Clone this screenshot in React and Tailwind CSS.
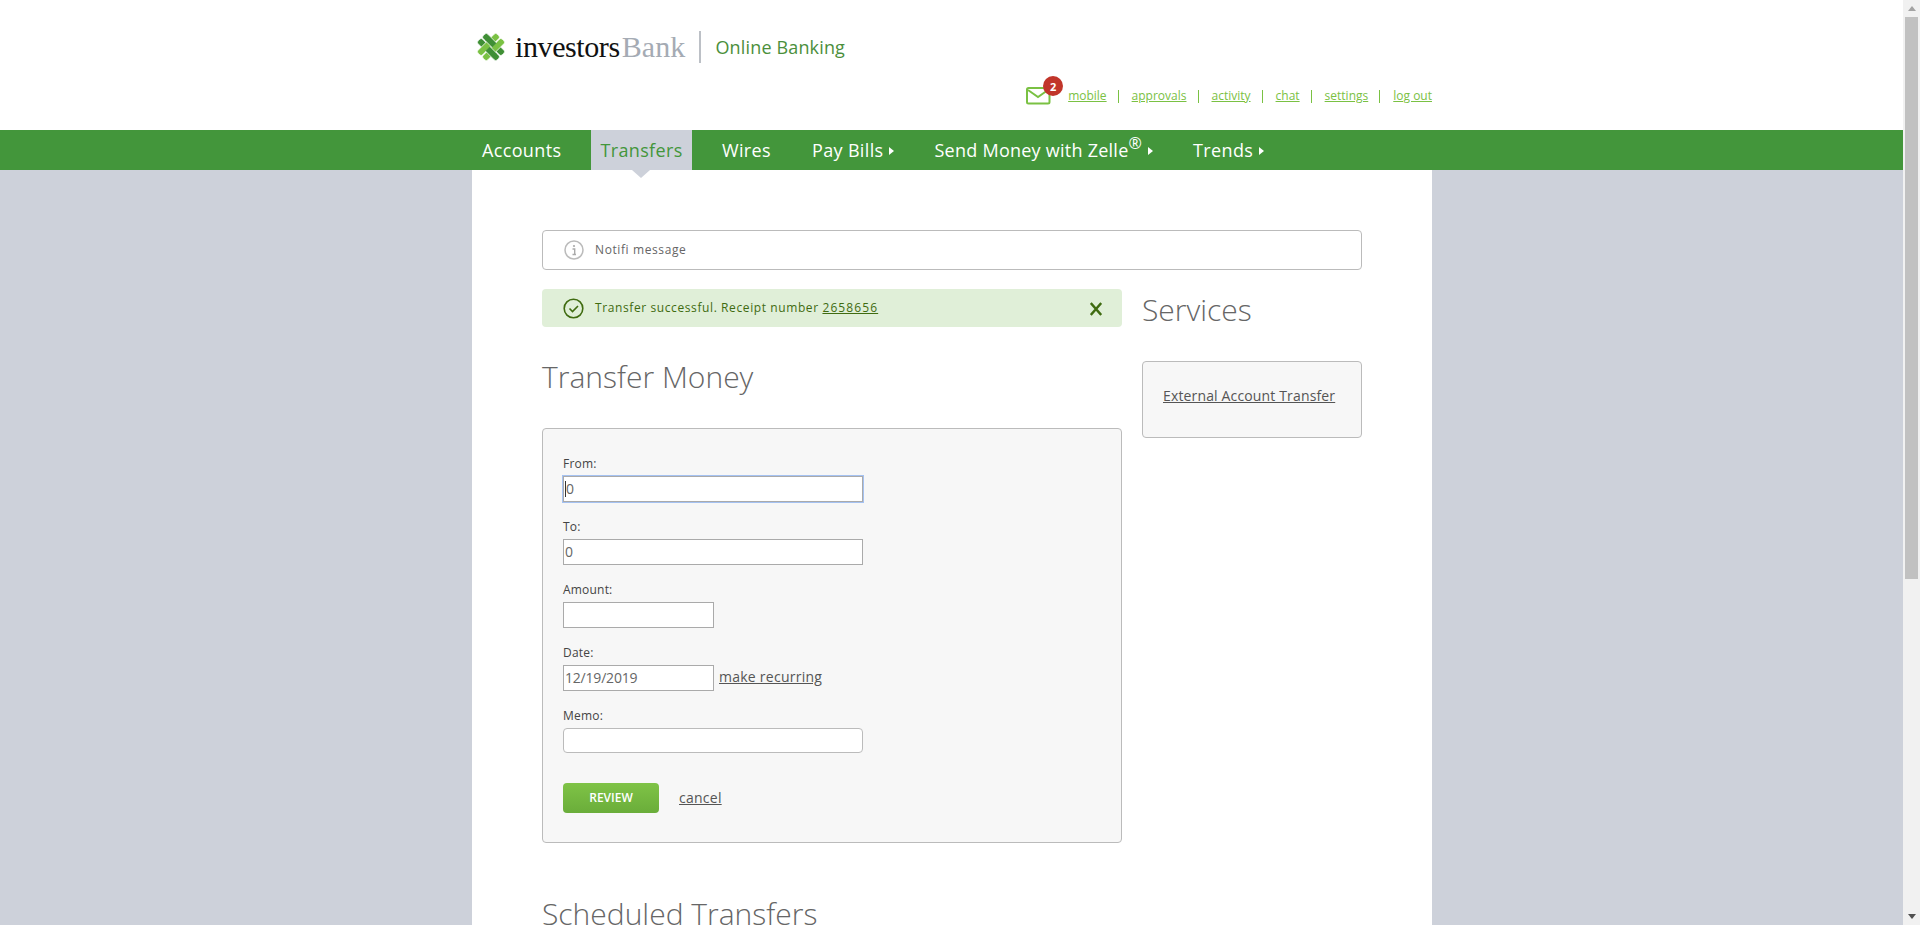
import React from "react";

const Caret = () => (
  <svg width="5" height="8" viewBox="0 0 5 8" className="ml-[6px] mt-[2px] inline-block">
    <path d="M0 0 L5 4 L0 8 Z" fill="#ffffff" />
  </svg>
);

const Logo = () => (
  <svg width="28" height="28" viewBox="0 0 28 28">
    <g transform="rotate(45 14 14)" stroke="#ffffff" strokeWidth="0.7">
      <rect x="0.5" y="7.2" width="27" height="6.4" rx="2" fill="#3f8f35" />
      <rect x="0.5" y="14.4" width="27" height="6.4" rx="2" fill="#3f8f35" />
      <rect x="7.2" y="0.5" width="6.4" height="27" rx="2" fill="#7ac143" />
      <rect x="14.4" y="0.5" width="6.4" height="27" rx="2" fill="#7ac143" />
      <rect x="5" y="7.2" width="10" height="6.4" fill="#3f8f35" stroke="none" />
      <rect x="13" y="14.4" width="10" height="6.4" fill="#3f8f35" stroke="none" />
      <path d="M5 7.2 H15 M5 13.6 H15 M13 14.4 H23 M13 20.8 H23" />
    </g>
  </svg>
);

const topLinks = ["mobile", "approvals", "activity", "chat", "settings", "log out"];

function Field({ label, children, className = "" }) {
  return (
    <div className={className}>
      <div className="mb-[3px] h-[16px] text-[12px] leading-[14px] tracking-[0.2px] text-[#444444]">{label}</div>
      {children}
    </div>
  );
}

const inputBox = "h-[26px] border border-[#aaaaaa] bg-white px-[1px] text-[14px] leading-[24px] tracking-[-0.2px] text-[#666666]";

export default function App() {
  return (
    <div className="flex h-[925px] w-full overflow-hidden bg-[#cdd1da] font-['Open_Sans',sans-serif]">
      <main className="min-w-0 flex-1 overflow-hidden">
        <header className="h-[130px] bg-white pl-[1px]">
          <div className="mx-auto flex h-full w-[960px] flex-col">
            <div className="flex h-[87px] items-center pl-[5px] pt-[6px]">
              <Logo />
              <div className="ml-[10px] font-['Liberation_Serif',serif] text-[30px] leading-[36px] tracking-[-0.4px] text-[#111111]">
                investors<span className="ml-[2px] tracking-[0.1px] text-[#a5abb4]">Bank</span>
              </div>
              <div className="ml-[14px] h-[32px] w-[2px] bg-[#bcc0c6]" />
              <div className="ml-[14px] text-[18px] leading-[24px] tracking-[0.15px] text-[#4b8f3c]">Online Banking</div>
            </div>
            <div className="flex items-center justify-end">
              <div className="relative mr-[18px] h-[18px] w-[24px]">
                <svg width="25" height="18" viewBox="0 0 25 18">
                  <rect x="1" y="1" width="22.5" height="15.5" rx="1.5" fill="none" stroke="#7ac143" strokeWidth="2" />
                  <path d="M2 3 L12 10 L22 3" fill="none" stroke="#7ac143" strokeWidth="2" />
                </svg>
                <span className="absolute left-[17px] top-[-11px] flex h-[20px] w-[20px] items-center justify-center rounded-full bg-[#c1352a] text-[11px] font-bold leading-none text-white">
                  2
                </span>
              </div>
              {topLinks.map((l, i) => (
                <React.Fragment key={l}>
                  <a className="text-[12px] leading-[18px] text-[#7ac143] underline">{l}</a>
                  {i < topLinks.length - 1 && <span className="ml-[11px] mr-[13px] h-[13px] w-[1px] bg-[#7ac143]" />}
                </React.Fragment>
              ))}
            </div>
          </div>
        </header>

        <nav className="h-[40px] bg-[#43963b] pl-[1px]">
          <div className="mx-auto flex h-full w-[960px] items-center text-[18px] tracking-[0.35px] text-white">
            <a className="ml-[10px] w-[109px]">Accounts</a>
            <a className="relative flex h-full w-[101px] items-center justify-center bg-[#cdd1da] text-[#43963b]">
              Transfers
              <span className="absolute left-[41px] top-[40px] h-0 w-0 border-x-[9px] border-t-[8px] border-x-transparent border-t-[#cdd1da]" />
            </a>
            <a className="ml-[30px]">Wires</a>
            <a className="ml-[41px] flex items-center">Pay Bills<Caret /></a>
            <a className="ml-[40px] flex items-center tracking-[0.25px]">
              <span>Send Money with Zelle<sup className="text-[16px]">®</sup></span><Caret />
            </a>
            <a className="ml-[40px] flex items-center">Trends<Caret /></a>
          </div>
        </nav>

        <div className="pl-[1px]">
          <div className="mx-auto w-[960px] bg-white px-[70px] pb-[60px] pt-[60px]">
            <div className="flex h-[40px] items-center rounded-[4px] border border-[#bbbbbb] pl-[21px] text-[12px] tracking-[0.6px] text-[#666666]">
              <svg width="20" height="20" viewBox="0 0 20 20" className="mr-[11px]">
                <circle cx="10" cy="10" r="9" fill="none" stroke="#bbbbbb" strokeWidth="1.5" />
                <circle cx="10" cy="6" r="1.1" fill="#aaaaaa" />
                <path d="M8.5 9 H10.7 V14 M8.5 14.5 H12" fill="none" stroke="#aaaaaa" strokeWidth="1.4" />
              </svg>
              Notifi message
            </div>

            <div className="mt-[19px] flex gap-[20px]">
              <div className="w-[580px] shrink-0">
                <div className="flex h-[38px] items-center rounded-[4px] bg-[#e0efd8] pl-[21px] pr-[20px] text-[12px] tracking-[0.6px] text-[#3f6b10]">
                  <svg width="21" height="21" viewBox="0 0 21 21" className="mr-[11px]">
                    <circle cx="10.5" cy="10.5" r="9.3" fill="none" stroke="#3f6b10" strokeWidth="1.6" />
                    <path d="M6.5 10.5 L9.5 13.5 L15 8" fill="none" stroke="#3f6b10" strokeWidth="1.6" />
                  </svg>
                  <span>
                    Transfer successful. Receipt number <span className="tracking-[1.1px] underline">2658656</span>
                  </span>
                  <svg width="12" height="14" viewBox="0 0 12 14" className="ml-auto mt-[2px]">
                    <path d="M0.8 1 L11.2 13 M11.2 1 L0.8 13" stroke="#3f6b10" strokeWidth="2.4" />
                  </svg>
                </div>

                <h1 className="mt-[30px] text-[30px] font-light leading-[40px] text-[#666666]">Transfer Money</h1>

                <div className="mt-[31px] h-[415px] rounded-[4px] border border-[#bbbbbb] bg-[#f7f7f7] pl-[20px] pt-[28px]">
                  <Field label="From:">
                    <div className={`${inputBox} flex w-[300px] items-center border-[#6d9be8] shadow-[0_0_0_1px_#a5c2f2]`}>
                      <span className="h-[16px] w-[1px] bg-[#333333]" />0
                    </div>
                  </Field>
                  <Field label="To:" className="mt-[18px]">
                    <div className={`${inputBox} w-[300px]`}>0</div>
                  </Field>
                  <Field label="Amount:" className="mt-[18px]">
                    <div className={`${inputBox} w-[151px]`} />
                  </Field>
                  <Field label="Date:" className="mt-[18px]">
                    <div className="flex items-center">
                      <div className={`${inputBox} w-[151px]`}>12/19/2019</div>
                      <a className="mb-[3px] ml-[5px] text-[14px] tracking-[0.25px] text-[#555555] underline">make recurring</a>
                    </div>
                  </Field>
                  <Field label="Memo:" className="mt-[18px]">
                    <div className="h-[25px] w-[300px] rounded-[4px] border border-[#bbbbbb] bg-white" />
                  </Field>
                  <div className="mt-[30px] flex items-center">
                    <button className="h-[30px] w-[96px] rounded-[4px] bg-gradient-to-b from-[#7fc346] to-[#6aad3a] text-[12px] font-semibold text-white">
                      REVIEW
                    </button>
                    <a className="mb-[2px] ml-[20px] text-[14px] tracking-[0.25px] text-[#555555] underline">cancel</a>
                  </div>
                </div>
              </div>

              <aside className="flex-1">
                <h2 className="mt-[1px] text-[30px] font-light leading-[40px] text-[#666666]">Services</h2>
                <div className="mt-[31px] h-[77px] rounded-[4px] border border-[#bbbbbb] bg-[#f7f7f7] pl-[20px] pt-[21px]">
                  <a className="text-[14px] leading-[20px] tracking-[0.15px] text-[#555555] underline">External Account Transfer</a>
                </div>
              </aside>
            </div>

            <h2 className="mt-[51px] text-[30px] font-light leading-[40px] text-[#666666]">Scheduled Transfers</h2>
          </div>
        </div>
      </main>

      <div className="flex h-full w-[17px] shrink-0 flex-col bg-[#f1f1f1]">
        <div className="flex h-[17px] items-center justify-center">
          <svg width="8" height="5" viewBox="0 0 8 5"><path d="M4 0 L8 5 H0 Z" fill="#a3a3a3" /></svg>
        </div>
        <div className="mx-[2px] h-[562px] bg-[#c1c1c1]" />
        <div className="mt-auto flex h-[17px] items-center justify-center">
          <svg width="8" height="5" viewBox="0 0 8 5"><path d="M0 0 H8 L4 5 Z" fill="#505050" /></svg>
        </div>
      </div>
    </div>
  );
}
